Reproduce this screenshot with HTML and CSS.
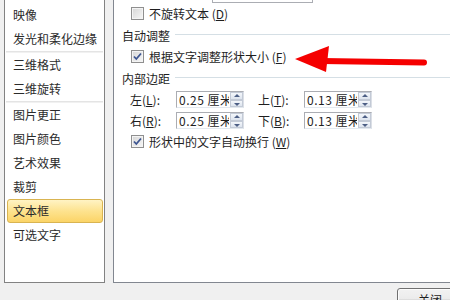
FILE: index.html
```html
<!DOCTYPE html>
<html lang="zh-CN">
<head>
    <meta charset="UTF-8">
    <title>设置形状格式</title>
    <link rel="stylesheet" href="styles.css">
</head>
<body>
    <div class="window">
        <div class="panes">
            <ul class="nav">
                <li>映像</li>
                <li>发光和柔化边缘</li>
                <li class="sep"></li>
                <li>三维格式</li>
                <li>三维旋转</li>
                <li class="sep"></li>
                <li>图片更正</li>
                <li>图片颜色</li>
                <li>艺术效果</li>
                <li>裁剪</li>
                <li class="active">文本框</li>
                <li>可选文字</li>
            </ul>

            <div class="content">
                <div class="combo"></div>

                <label class="check">
                    <span class="box"></span>
                    <span>不旋转文本 (<u>D</u>)</span>
                </label>

                <div class="group">自动调整</div>
                <label class="check">
                    <span class="box">
                        <svg viewBox="0 0 11 11" width="11" height="11"><path d="M2 5.5 L4.3 8 L9 2.5" /></svg>
                    </span>
                    <span>根据文字调整形状大小 (<u>F</u>)</span>
                </label>

                <div class="group">内部边距</div>
                <div class="spin-row">
                    <span class="lbl">左(<u>L</u>):</span>
                    <span class="spin">
                        <span class="val">0.25 厘米</span>
                        <span class="arrows"><i class="up"></i><i class="down"></i></span>
                    </span>
                    <span class="lbl second">上(<u>T</u>):</span>
                    <span class="spin">
                        <span class="val">0.13 厘米</span>
                        <span class="arrows"><i class="up"></i><i class="down"></i></span>
                    </span>
                </div>
                <div class="spin-row">
                    <span class="lbl">右(<u>R</u>):</span>
                    <span class="spin">
                        <span class="val">0.25 厘米</span>
                        <span class="arrows"><i class="up"></i><i class="down"></i></span>
                    </span>
                    <span class="lbl second">下(<u>B</u>):</span>
                    <span class="spin">
                        <span class="val">0.13 厘米</span>
                        <span class="arrows"><i class="up"></i><i class="down"></i></span>
                    </span>
                </div>

                <label class="check">
                    <span class="box">
                        <svg viewBox="0 0 11 11" width="11" height="11"><path d="M2 5.5 L4.3 8 L9 2.5" /></svg>
                    </span>
                    <span>形状中的文字自动换行 (<u>W</u>)</span>
                </label>
            </div>
        </div>

        <div class="footer">
            <button class="btn">关闭</button>
        </div>
    </div>

    <!-- annotation arrow drawn over the dialog -->
    <svg class="arrow" width="450" height="300" viewBox="0 0 450 300">
        <line x1="322" y1="61" x2="424" y2="62.5" stroke="#f50000" stroke-width="6" stroke-linecap="round" />
        <polygon points="295,59 329,46 326,72" fill="#f50000" />
    </svg>
</body>
</html>
```

FILE: styles.css
```css
body {
    margin: 0;
    width: 450px;
    height: 300px;
    overflow: hidden;
    background: #f0f0f0;
    font-family: "Noto Sans CJK SC", "DejaVu Sans", sans-serif;
    font-size: 12px;
    color: #1e1e1e;
    position: relative;
}

.window {
    display: flex;
    flex-direction: column;
}

.panes {
    display: flex;
    align-items: flex-start;
    height: 283px;
}

/* left category list */
.nav {
    list-style: none;
    margin: 0 0 0 4px;
    padding: 3px 0 0 0;
    width: 99px;
    height: 279px;
    background: #fff;
    border: 1px solid #828282;
    border-top: none;
    box-sizing: content-box;
    color: #2b2b2b;
}

.nav li {
    height: 24px;
    line-height: 24px;
    padding-left: 8px;
    white-space: nowrap;
}

.nav li.sep {
    height: 0;
    margin: 0 1px;
    border-top: 1px solid #e4e4e4;
    border-bottom: 1px solid #f1f1f1;
    padding: 0;
}

.nav li.active {
    margin: 0 1px 0 2px;
    padding-left: 5px;
    height: 22px;
    line-height: 22px;
    border: 1px solid #d9b451;
    border-radius: 3px;
    background: linear-gradient(#fff3c4, #fde38f 50%, #fbd467);
}

/* right settings panel */
.content {
    flex: 1;
    margin-left: 8px;
    height: 282px;
    background: #fff;
    border-left: 1px solid #828790;
    border-bottom: 1px solid #828790;
    padding-left: 16px;
}

.combo {
    width: 99px;
    height: 2px;
    margin-left: 82px;
    border: 1px solid #abadb3;
    border-top: none;
}

.check {
    display: flex;
    align-items: center;
    height: 21px;
    gap: 5px;
    padding-left: 1px;
}

.box {
    width: 11px;
    height: 11px;
    border: 1px solid #8f8f8f;
    background: linear-gradient(135deg, #d6d6d6, #f7f7f7);
    box-shadow: inset 0 0 0 1px #f4f4f4;
    display: flex;
    align-items: center;
    justify-content: center;
}

.box svg path {
    fill: none;
    stroke: #3d5591;
    stroke-width: 1.8;
}

u {
    text-decoration: underline;
    text-underline-offset: 1px;
}

.group {
    display: flex;
    align-items: center;
    height: 22px;
    margin-left: -8px;
}

.group::after {
    content: "";
    flex: 1;
    height: 1px;
    margin: -1px 0 0 5px;
    background: #d5dfe5;
}

.spin-row {
    display: flex;
    align-items: center;
    height: 21px;
}

.spin-row:first-of-type {
    margin-top: 0;
}

.lbl {
    width: 46px;
}

.lbl.second {
    margin-left: 14px;
}

.spin {
    display: flex;
    width: 66px;
    height: 15px;
    border: 1px solid #abadb3;
    border-bottom-color: #e3e9ef;
    border-right-color: #dbdfe6;
    overflow: hidden;
    position: relative;
}

.val {
    padding-left: 2px;
    line-height: 15px;
    white-space: nowrap;
    letter-spacing: 0.5px;
}

.arrows {
    position: absolute;
    right: 0;
    top: 0;
    width: 14px;
    height: 15px;
    display: flex;
    flex-direction: column;
    background: #fff;
}

.arrows i {
    flex: 1;
    margin: 0 0 0 1px;
    border: 1px solid #c3cad6;
    background: linear-gradient(#f4f7fb, #dde4ee);
    position: relative;
}

.arrows i::after {
    content: "";
    position: absolute;
    left: 3px;
    border-left: 3px solid transparent;
    border-right: 3px solid transparent;
}

.arrows .up::after {
    top: 1px;
    border-bottom: 3px solid #4d5f85;
}

.arrows .down::after {
    top: 2px;
    border-top: 3px solid #4d5f85;
}

.footer {
    display: flex;
    justify-content: flex-end;
    padding-top: 5px;
}

.btn {
    width: 75px;
    height: 23px;
    margin-right: -22px;
    font-family: inherit;
    font-size: 12px;
    color: #1e1e1e;
    border: 1px solid #707070;
    border-radius: 3px;
    background: linear-gradient(#f2f2f2, #ebebeb 50%, #dddddd 50%, #cfcfcf);
    box-shadow: inset 0 0 0 1px #fcfcfc;
    padding: 0 0 0 0;
    text-align: left;
    padding-left: 20px;
}

.arrow {
    position: absolute;
    left: 0;
    top: 0;
    pointer-events: none;
}
```
